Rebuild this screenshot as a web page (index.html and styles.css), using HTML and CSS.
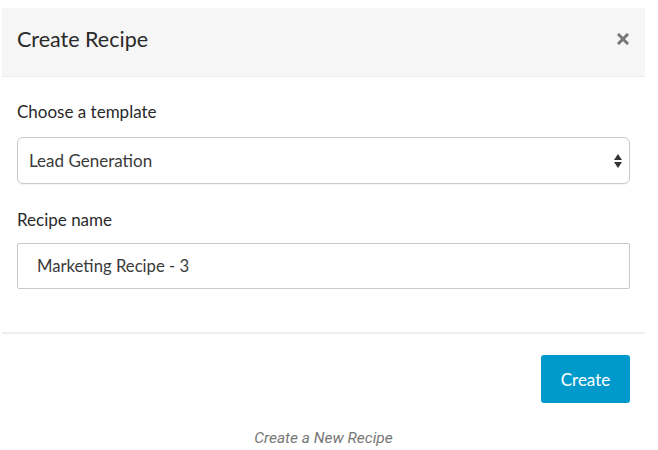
FILE: index.html
```html
<!DOCTYPE html>
<html>
<head>
<meta charset="utf-8">
<link rel="stylesheet" href="styles.css">
</head>
<body>
<div class="modal">
  <div class="modal-header">
    <h1 class="modal-title">Create Recipe</h1>
    <svg class="close" width="12" height="12" viewBox="0 0 12 12"><path d="M2 2 L10 10 M10 2 L2 10" stroke="#777" stroke-width="3" stroke-linecap="square"/></svg>
  </div>
  <div class="modal-body">
    <label class="field-label">Choose a template</label>
    <div class="select">
      <span class="select-text">Lead Generation</span>
      <svg class="select-arrows" width="8" height="14" viewBox="0 0 8 14"><path d="M4 0 L8 6 L0 6 Z M0 8 L8 8 L4 14 Z" fill="#333"/></svg>
    </div>
    <label class="field-label second">Recipe name</label>
    <input class="text-input" type="text" value="Marketing Recipe - 3">
  </div>
  <div class="modal-footer">
    <button class="btn-create">Create</button>
  </div>
  <p class="caption">Create a New Recipe</p>
</div>
</body>
</html>
```
FILE: styles.css
```css
html, body {
  margin: 0;
  padding: 0;
  background: #ffffff;
}
body {
  font-family: Lato, "Open Sans", sans-serif;
  color: #2a2a2a;
}
.modal {
  margin: 8px 0 0 2px;
  width: 643px;
  background: #ffffff;
}
.modal-header {
  height: 69px;
  box-sizing: border-box;
  background: #f6f6f6;
  border-bottom: 1px solid #ececec;
  display: flex;
  align-items: center;
  justify-content: space-between;
  padding: 0 16px 0 15px;
}
.modal-title {
  margin: 0;
  font-size: 21.5px;
  font-weight: 400;
  color: #2a2a2a;
  line-height: 24px;
  padding-bottom: 7px;
}
.close {
  display: block;
  margin-bottom: 6px;
}
.modal-body {
  padding: 25px 15px 43px 15px;
  display: flex;
  flex-direction: column;
}
.field-label {
  display: block;
  font-size: 17px;
  line-height: 20px;
  color: #2a2a2a;
}
.field-label.second {
  margin-top: 26px;
}
.select {
  margin-top: 15px;
  height: 47px;
  box-sizing: border-box;
  border: 1px solid #c8c8c8;
  border-radius: 6px;
  display: flex;
  align-items: center;
  justify-content: space-between;
  padding: 0 7px 0 11px;
  box-shadow: 0 1px 1px rgba(0,0,0,0.05);
}
.select-text {
  font-size: 17px;
  color: #3a3a3a;
}
.select-arrows {
  display: block;
}
.text-input {
  margin-top: 13px;
  height: 46px;
  box-sizing: border-box;
  border: 1px solid #c8c8c8;
  border-radius: 2px;
  padding: 0 19px;
  font-family: Lato, "Open Sans", sans-serif;
  font-size: 16.7px;
  color: #3a3a3a;
  outline: none;
  width: 100%;
}
.modal-footer {
  border-top: 2px solid #eeeeee;
  padding: 21px 15px 0 15px;
  display: flex;
  justify-content: flex-end;
}
.btn-create {
  width: 89px;
  height: 48px;
  background: #0099cc;
  border: none;
  border-radius: 3px;
  color: #ffffff;
  font-family: Lato, "Open Sans", sans-serif;
  font-size: 17px;
  padding: 0;
}
.caption {
  margin: 27px 0 0 0;
  text-align: center;
  font-family: Roboto, sans-serif;
  font-style: italic;
  font-size: 15.5px;
  line-height: 16px;
  color: #777777;
}
```
